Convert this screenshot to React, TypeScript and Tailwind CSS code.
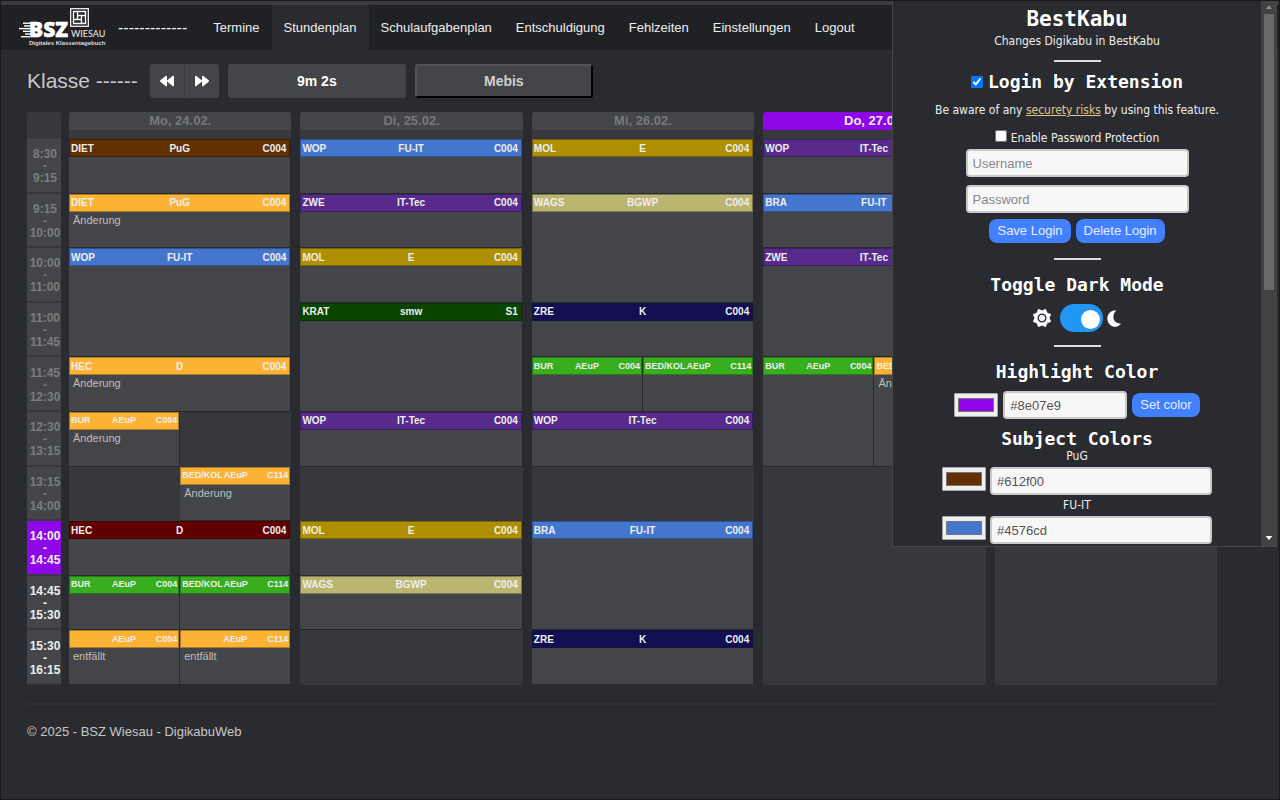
import React from 'react';
import { FaBackward, FaForward } from 'react-icons/fa';

type Lesson = {
  teacher: string;
  subject: string;
  room: string;
  place: string;
  color: string;
  note?: string;
  half?: boolean;
};

const BROWN = 'bg-[#612f00] border-[#3f2006]';
const ORANGE = 'bg-[#fcb334] border-[#a87a2a]';
const BLUE = 'bg-[#4576cd] border-[#315393]';
const PURPLE = 'bg-[#572a8c] border-[#392060]';
const GOLD = 'bg-[#ad8f00] border-[#75620a]';
const DARK_GREEN = 'bg-[#0a4500] border-[#0e2f0b]';
const GREEN = 'bg-[#38ae1e] border-[#2a7a1b]';
const KHAKI = 'bg-[#bab571] border-[#7d7a52]';
const NAVY = 'bg-[#110f50] border-[#14133a]';
const RED = 'bg-[#610000] border-[#3f0608]';

const monday: Lesson[] = [
  { teacher: 'DIET', subject: 'PuG', room: 'C004', color: BROWN, place: 'row-start-1 col-span-2' },
  { teacher: 'DIET', subject: 'PuG', room: 'C004', color: ORANGE, place: 'row-start-2 col-span-2', note: 'Änderung' },
  { teacher: 'WOP', subject: 'FU-IT', room: 'C004', color: BLUE, place: 'row-start-3 row-span-2 col-span-2' },
  { teacher: 'HEC', subject: 'D', room: 'C004', color: ORANGE, place: 'row-start-5 col-span-2', note: 'Änderung' },
  { teacher: 'BUR', subject: 'AEuP', room: 'C004', color: ORANGE, place: 'row-start-6 col-start-1', note: 'Änderung', half: true },
  { teacher: 'BED/KOL', subject: 'AEuP', room: 'C114', color: ORANGE, place: 'row-start-7 col-start-2', note: 'Änderung', half: true },
  { teacher: 'HEC', subject: 'D', room: 'C004', color: RED, place: 'row-start-8 col-span-2' },
  { teacher: 'BUR', subject: 'AEuP', room: 'C004', color: GREEN, place: 'row-start-9 col-start-1', half: true },
  { teacher: 'BED/KOL', subject: 'AEuP', room: 'C114', color: GREEN, place: 'row-start-9 col-start-2', half: true },
  { teacher: '', subject: 'AEuP', room: 'C004', color: ORANGE, place: 'row-start-10 col-start-1', note: 'entfällt', half: true },
  { teacher: '', subject: 'AEuP', room: 'C114', color: ORANGE, place: 'row-start-10 col-start-2', note: 'entfällt', half: true },
];

const tuesday: Lesson[] = [
  { teacher: 'WOP', subject: 'FU-IT', room: 'C004', color: BLUE, place: 'row-start-1 col-span-2' },
  { teacher: 'ZWE', subject: 'IT-Tec', room: 'C004', color: PURPLE, place: 'row-start-2 col-span-2' },
  { teacher: 'MOL', subject: 'E', room: 'C004', color: GOLD, place: 'row-start-3 col-span-2' },
  { teacher: 'KRAT', subject: 'smw', room: 'S1', color: DARK_GREEN, place: 'row-start-4 row-span-2 col-span-2' },
  { teacher: 'WOP', subject: 'IT-Tec', room: 'C004', color: PURPLE, place: 'row-start-6 col-span-2' },
  { teacher: 'MOL', subject: 'E', room: 'C004', color: GOLD, place: 'row-start-8 col-span-2' },
  { teacher: 'WAGS', subject: 'BGWP', room: 'C004', color: KHAKI, place: 'row-start-9 col-span-2' },
];

const wednesday: Lesson[] = [
  { teacher: 'MOL', subject: 'E', room: 'C004', color: GOLD, place: 'row-start-1 col-span-2' },
  { teacher: 'WAGS', subject: 'BGWP', room: 'C004', color: KHAKI, place: 'row-start-2 row-span-2 col-span-2' },
  { teacher: 'ZRE', subject: 'K', room: 'C004', color: NAVY, place: 'row-start-4 col-span-2' },
  { teacher: 'BUR', subject: 'AEuP', room: 'C004', color: GREEN, place: 'row-start-5 col-start-1', half: true },
  { teacher: 'BED/KOL', subject: 'AEuP', room: 'C114', color: GREEN, place: 'row-start-5 col-start-2', half: true },
  { teacher: 'WOP', subject: 'IT-Tec', room: 'C004', color: PURPLE, place: 'row-start-6 col-span-2' },
  { teacher: 'BRA', subject: 'FU-IT', room: 'C004', color: BLUE, place: 'row-start-8 row-span-2 col-span-2' },
  { teacher: 'ZRE', subject: 'K', room: 'C004', color: NAVY, place: 'row-start-10 col-span-2' },
];

const thursday: Lesson[] = [
  { teacher: 'WOP', subject: 'IT-Tec', room: 'C004', color: PURPLE, place: 'row-start-1 col-span-2' },
  { teacher: 'BRA', subject: 'FU-IT', room: 'C004', color: BLUE, place: 'row-start-2 col-span-2' },
  { teacher: 'ZWE', subject: 'IT-Tec', room: 'C004', color: PURPLE, place: 'row-start-3 row-span-2 col-span-2' },
  { teacher: 'BUR', subject: 'AEuP', room: 'C004', color: GREEN, place: 'row-start-5 row-span-2 col-start-1', half: true },
  { teacher: 'BED/KOL', subject: 'AEuP', room: 'C114', color: ORANGE, place: 'row-start-5 row-span-2 col-start-2', note: 'Änderung', half: true },
];

const days = [
  { label: 'Mo, 24.02.', lessons: monday },
  { label: 'Di, 25.02.', lessons: tuesday },
  { label: 'Mi, 26.02.', lessons: wednesday },
  { label: 'Do, 27.02.', lessons: thursday, today: true },
  { label: 'Fr, 28.02.', lessons: [] as Lesson[] },
];

const times = [
  ['8:30', '9:15'],
  ['9:15', '10:00'],
  ['10:00', '11:00'],
  ['11:00', '11:45'],
  ['11:45', '12:30'],
  ['12:30', '13:15'],
  ['13:15', '14:00'],
  ['14:00', '14:45'],
  ['14:45', '15:30'],
  ['15:30', '16:15'],
];
const CURRENT_SLOT = 7;

const navItems = ['Termine', 'Stundenplan', 'Schulaufgabenplan', 'Entschuldigung', 'Fehlzeiten', 'Einstellungen', 'Logout'];

function Logo() {
  return (
    <svg width="88" height="40" viewBox="0 0 88 40" className="block" role="img" aria-label="BSZ Wiesau">
      <g fill="#fff">
        <rect x="4" y="14.500" width="9" height="1.400" />
        <rect x="5" y="17.200" width="8" height="1.400" />
        <rect x="0" y="19.900" width="12" height="1.400" />
        <rect x="4" y="22.600" width="8" height="1.400" />
        <rect x="6" y="25.300" width="6" height="1.400" />
        <rect x="2" y="28" width="9" height="1.400" />
      </g>
      <text x="10" y="29" fill="#fff" stroke="#fff" strokeWidth="0.500" fontFamily="Open Sans, sans-serif" fontWeight="800" fontSize="21">BSZ</text>
      <g fill="none" stroke="#fff">
        <rect x="51.700" y="0.700" width="17.600" height="17.600" strokeWidth="1.200" />
        <path
          strokeWidth="1.400"
          d="M54.500 3.500h12v12h-12zM58.500 3.500v8M54.500 11.500h8M62.500 15.500v-8M66.500 7.500h-8"
        />
      </g>
      <text x="52" y="29" fill="#eee" fontFamily="Lato, sans-serif" fontSize="9">WIESAU</text>
      <text x="10" y="37" fill="#ddd" fontFamily="Liberation Sans, sans-serif" fontWeight="700" fontSize="6">Digitales Klassentagebuch</text>
    </svg>
  );
}

function LessonCard({ lesson }: { lesson: Lesson }) {
  return (
    <article className={`${lesson.place} min-w-0 overflow-hidden border-r border-b border-[#27282c] bg-[#444548]`}>
      <header
        className={`grid h-[18px] grid-cols-[1fr_auto_1fr] items-center gap-px border px-px font-bold text-[#eee] ${
          lesson.half ? 'text-[9px]' : 'text-[10px]'
        } ${lesson.color}`}
      >
        <span className="whitespace-nowrap">{lesson.teacher}</span>
        <span className="text-center">{lesson.subject}</span>
        <span className={lesson.half ? 'text-right' : 'pr-[2px] text-right'}>{lesson.room}</span>
      </header>
      {lesson.note && <p className="px-1 text-[11px] leading-4 text-[#bfbfbf]">{lesson.note}</p>}
    </article>
  );
}

function SectionTitle({ children }: { children: React.ReactNode }) {
  return <h2 className="font-['DejaVu_Sans_Mono',monospace] text-[18px] leading-6 font-bold text-white">{children}</h2>;
}

function Divider() {
  return <hr className="h-0.5 w-[47px] border-0 bg-[#dcdcdc]" />;
}

const fieldClass =
  'h-7 rounded-[4px] border-2 border-[#c9c9c9] bg-[#f7f7f7] px-[5px] font-[Liberation_Sans,Arial,sans-serif] text-[13px] text-[#555] placeholder:text-[#888] outline-none';
const buttonClass =
  'h-6 rounded-lg bg-[#4380ff] px-2 font-[Liberation_Sans,Arial,sans-serif] text-[13px] text-[#e8eeff]';

function ColorSwatch({ value, label }: { value: string; label: string }) {
  return (
    <input
      type="color"
      defaultValue={value}
      aria-label={label}
      className="h-6 w-11 shrink-0 rounded-[1px] border border-[#a8a8a8] bg-[#efefef] px-px py-0"
    />
  );
}

function SubjectColor({ name, value }: { name: string; value: string }) {
  return (
    <div className="flex w-full flex-col items-center">
      <label htmlFor={name} className="leading-4">{name}</label>
      <div className="mt-[3px] flex items-start gap-1">
        <ColorSwatch value={value} label={`${name} Farbe`} />
        <input id={name} defaultValue={value} className={`${fieldClass} w-[222px]`} />
      </div>
    </div>
  );
}

function ExtensionPopup() {
  return (
    <aside className="absolute top-0 right-[2px] flex h-[546px] w-[385px] overflow-hidden border border-t-0 border-[#47484a] bg-[#2a2b30] font-['DejaVu_Sans_Condensed','Noto_Sans',sans-serif] text-[12px] text-[#eee]">
      <div className="flex min-w-0 flex-1 flex-col items-center">
        <h1 className="mt-1.5 font-['DejaVu_Sans_Mono',monospace] text-[21px] leading-6 font-bold text-white">BestKabu</h1>
        <p className="mt-0.5 leading-4">Changes Digikabu in BestKabu</p>
        <div className="mt-[11px]"><Divider /></div>
        <label className="mt-2 flex items-center gap-[5px]">
          <input type="checkbox" defaultChecked className="size-3 accent-[#0075ff]" />
          <SectionTitle>Login by Extension</SectionTitle>
        </label>
        <p className="mt-2 leading-4">
          Be aware of any <a href="#risks" className="text-[#e3c48d] underline">securety risks</a> by using this feature.
        </p>
        <label className="mt-3 flex items-start gap-1 leading-4">
          <input type="checkbox" className="size-3" />
          Enable Password Protection
        </label>
        <input aria-label="Username" placeholder="Username" className={`${fieldClass} mt-[3px] w-[223px]`} />
        <input aria-label="Password" type="password" placeholder="Password" className={`${fieldClass} mt-2 w-[223px]`} />
        <div className="mt-1.5 flex gap-[5px]">
          <button className={buttonClass}>Save Login</button>
          <button className={buttonClass}>Delete Login</button>
        </div>
        <div className="mt-[15px]"><Divider /></div>
        <div className="mt-[13px]"><SectionTitle>Toggle Dark Mode</SectionTitle></div>
        <label className="mt-[7px] flex items-center">
          <svg width="20" height="20" viewBox="-10 -10 20 20" className="mr-2" aria-hidden="true">
            <path
              fill="#fff"
              d="M8.800 3.600L5.100 5.100 3.600 8.800 0 7.200-3.600 8.800-5.100 5.100-8.800 3.600-7.200 0-8.800-3.600-5.100-5.100-3.600-8.800 0-7.200 3.600-8.800 5.100-5.100 8.800-3.600 7.200 0z"
              stroke="#fff"
              strokeWidth="0.600"
            />
            <circle r="3.900" fill="#eee" stroke="#2a2b30" strokeWidth="1.300" />
          </svg>
          <input type="checkbox" defaultChecked aria-label="Dark Mode" className="peer sr-only" />
          <span className="flex h-7 w-[43px] items-center justify-end rounded-full bg-[#2196f3] pt-0.5 pr-[3px]">
            <span className="size-[19px] rounded-full bg-white" />
          </span>
          <svg width="15" height="17" viewBox="0 0 15 17" className="ml-1" aria-hidden="true">
            <path
              fill="#fff"
              d="M9.300.300C4.300.300.300 3.800.300 8.500s3.800 8.300 8.200 8.300c2.300 0 4.300-1.200 5.500-3.200-4.200.300-7.600-2.600-7.600-6.600 0-2.700 1.100-4.800 2.900-6.700z"
            />
          </svg>
        </label>
        <div className="mt-[13px]"><Divider /></div>
        <div className="mt-[13px]"><SectionTitle>Highlight Color</SectionTitle></div>
        <div className="mt-[7px] flex items-center gap-[5px]">
          <ColorSwatch value="#8e07e9" label="Highlight Farbe" />
          <input aria-label="Highlight Color" defaultValue="#8e07e9" className={`${fieldClass} w-[124px]`} />
          <button className={buttonClass}>Set color</button>
        </div>
        <div className="mt-2"><SectionTitle>Subject Colors</SectionTitle></div>
        <div className="-mt-[3px] flex flex-col gap-0.5">
          <SubjectColor name="PuG" value="#612f00" />
          <SubjectColor name="FU-IT" value="#4576cd" />
        </div>
      </div>
      <div className="flex w-[15px] shrink-0 flex-col items-center justify-between bg-[#424242]" aria-hidden="true">
        <div className="flex flex-col items-center">
          <svg width="8" height="13" viewBox="0 0 8 13"><path fill="#8b8b8b" d="M1 8l3-4 3 4z" /></svg>
          <div className="h-[276px] w-[10px] bg-[#686868]" />
        </div>
        <svg width="8" height="13" viewBox="0 0 8 13"><path fill="#fff" d="M.500 3l3.500 4 3.500-4z" /></svg>
      </div>
    </aside>
  );
}

export default function App() {
  return (
    <div className="relative min-h-screen overflow-hidden border border-[#17181a] bg-[#2a2b30] font-['Liberation_Sans',Arial,sans-serif] text-[13px] text-[#c8c8c8]">
      <div className="h-1 bg-[#3a3c3d]" />
      <nav className="flex h-[45px] items-center bg-[#202124] pl-[18px]">
        <a href="#home"><Logo /></a>
        <a href="#user" className="ml-[11px] text-[16px] text-[#eee]">-------------</a>
        <ul className="ml-[14px] flex self-stretch text-[#eee]">
          {navItems.map((item) => (
            <li key={item} className={item === 'Stundenplan' ? 'bg-[#2a2b30]' : ''}>
              <a href={`#${item}`} className="flex h-full items-center px-3">{item}</a>
            </li>
          ))}
        </ul>
      </nav>

      <main className="pr-[62px] pl-[26px]">
        <div className="mt-[14px] flex h-[34px] items-center">
          <h1 className="mr-3 text-[21px]">Klasse ------</h1>
          <div className="mr-[9px] flex h-full overflow-hidden rounded-[3px] bg-[#444548] text-white">
            <button aria-label="Zurück" className="flex w-[35px] items-center justify-center border-r border-[#38393d]"><FaBackward size={14} /></button>
            <button aria-label="Weiter" className="flex w-[34px] items-center justify-center"><FaForward size={14} /></button>
          </div>
          <div className="mr-[9px] flex h-full w-[178px] items-center justify-center rounded-[3px] bg-[#444548] text-[14px] font-bold text-white">9m 2s</div>
          <button className="h-full w-[178px] rounded-[3px] border-2 border-t-[#525356] border-r-black border-b-black border-l-[#525356] bg-[#444548] text-[14px] font-bold text-[#d0d0d0]">Mebis</button>
        </div>

        <section className="mt-[14px] flex gap-2">
          <div className="flex w-[34px] shrink-0 flex-col rounded-[3px] bg-[#37383d]">
            <div className="h-[27px]" />
            <ol className="grid h-[546px] grid-rows-10">
              {times.map(([from, to], i) => (
                <li
                  key={from}
                  className={`flex flex-col items-center justify-center border-b-2 border-[#37383d] pt-0.5 pl-0.5 text-[12px] leading-3 font-bold ${
                    i === CURRENT_SLOT ? 'bg-[#8e07e9] text-[#eee]' : i > CURRENT_SLOT ? 'bg-[#444548] text-[#eee]' : 'bg-[#444548] text-[#7c7d7f]'
                  }`}
                >
                  <span>{from}</span>
                  <span>-</span>
                  <span>{to}</span>
                </li>
              ))}
            </ol>
          </div>
          <div className="grid min-w-0 flex-1 grid-cols-5 gap-[9px]">
            {days.map((day) => (
              <div key={day.label} className="min-w-0 overflow-hidden rounded-[3px] bg-[#37383d]">
                <h2 className={`h-[18px] text-center leading-[18px] font-bold ${day.today ? 'bg-[#8e07e9] text-[#eee]' : 'bg-[#444548] text-[#77787a]'}`}>
                  {day.label}
                </h2>
                <div className="mt-[9px] grid h-[546px] grid-cols-2 grid-rows-10">
                  {day.lessons.map((lesson) => (
                    <LessonCard key={lesson.place} lesson={lesson} />
                  ))}
                </div>
              </div>
            ))}
          </div>
        </section>

        <footer className="mt-[18px] border-t-2 border-[#323338] pt-[17px] leading-5">© 2025 - BSZ Wiesau - DigikabuWeb</footer>
      </main>

      <ExtensionPopup />
    </div>
  );
}
